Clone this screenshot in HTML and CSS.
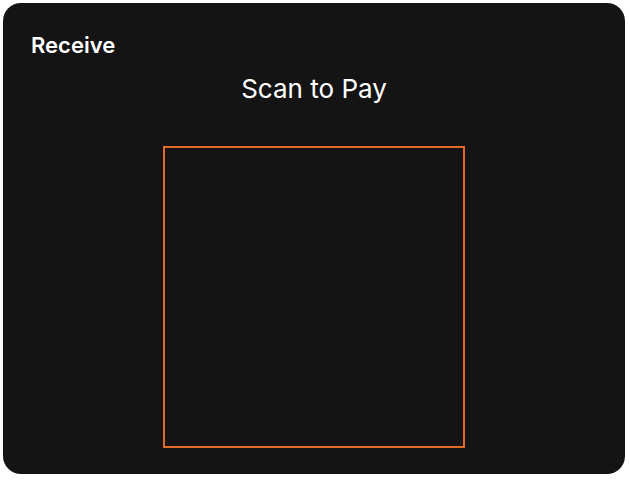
FILE: index.html
```html
<!DOCTYPE html>
<html>
<head>
<meta charset="utf-8">
<link rel="stylesheet" href="styles.css">
</head>
<body>
<div class="card">
  <div class="title">Receive</div>
  <div class="subtitle">Scan to Pay</div>
  <div class="qr"></div>
</div>
</body>
</html>
```
FILE: styles.css
```css
html, body {
  margin: 0;
  padding: 0;
  background: #ffffff;
}
body {
  padding: 3px 5px 8px 3px;
  font-family: Inter, "Liberation Sans", sans-serif;
}
.card {
  width: 622px;
  height: 471px;
  box-sizing: border-box;
  background: #141414;
  border-radius: 18px;
  padding: 30px 28px 0 28px;
  display: flex;
  flex-direction: column;
}
.title {
  color: #ffffff;
  font-size: 22px;
  font-weight: 600;
  line-height: 24px;
}
.subtitle {
  color: #ffffff;
  font-size: 26px;
  font-weight: 400;
  line-height: 32px;
  text-align: center;
  margin-top: 16px;
}
.qr {
  align-self: center;
  width: 302px;
  height: 302px;
  box-sizing: border-box;
  border: 2px solid #e46b25;
  margin-top: 41px;
}
```
